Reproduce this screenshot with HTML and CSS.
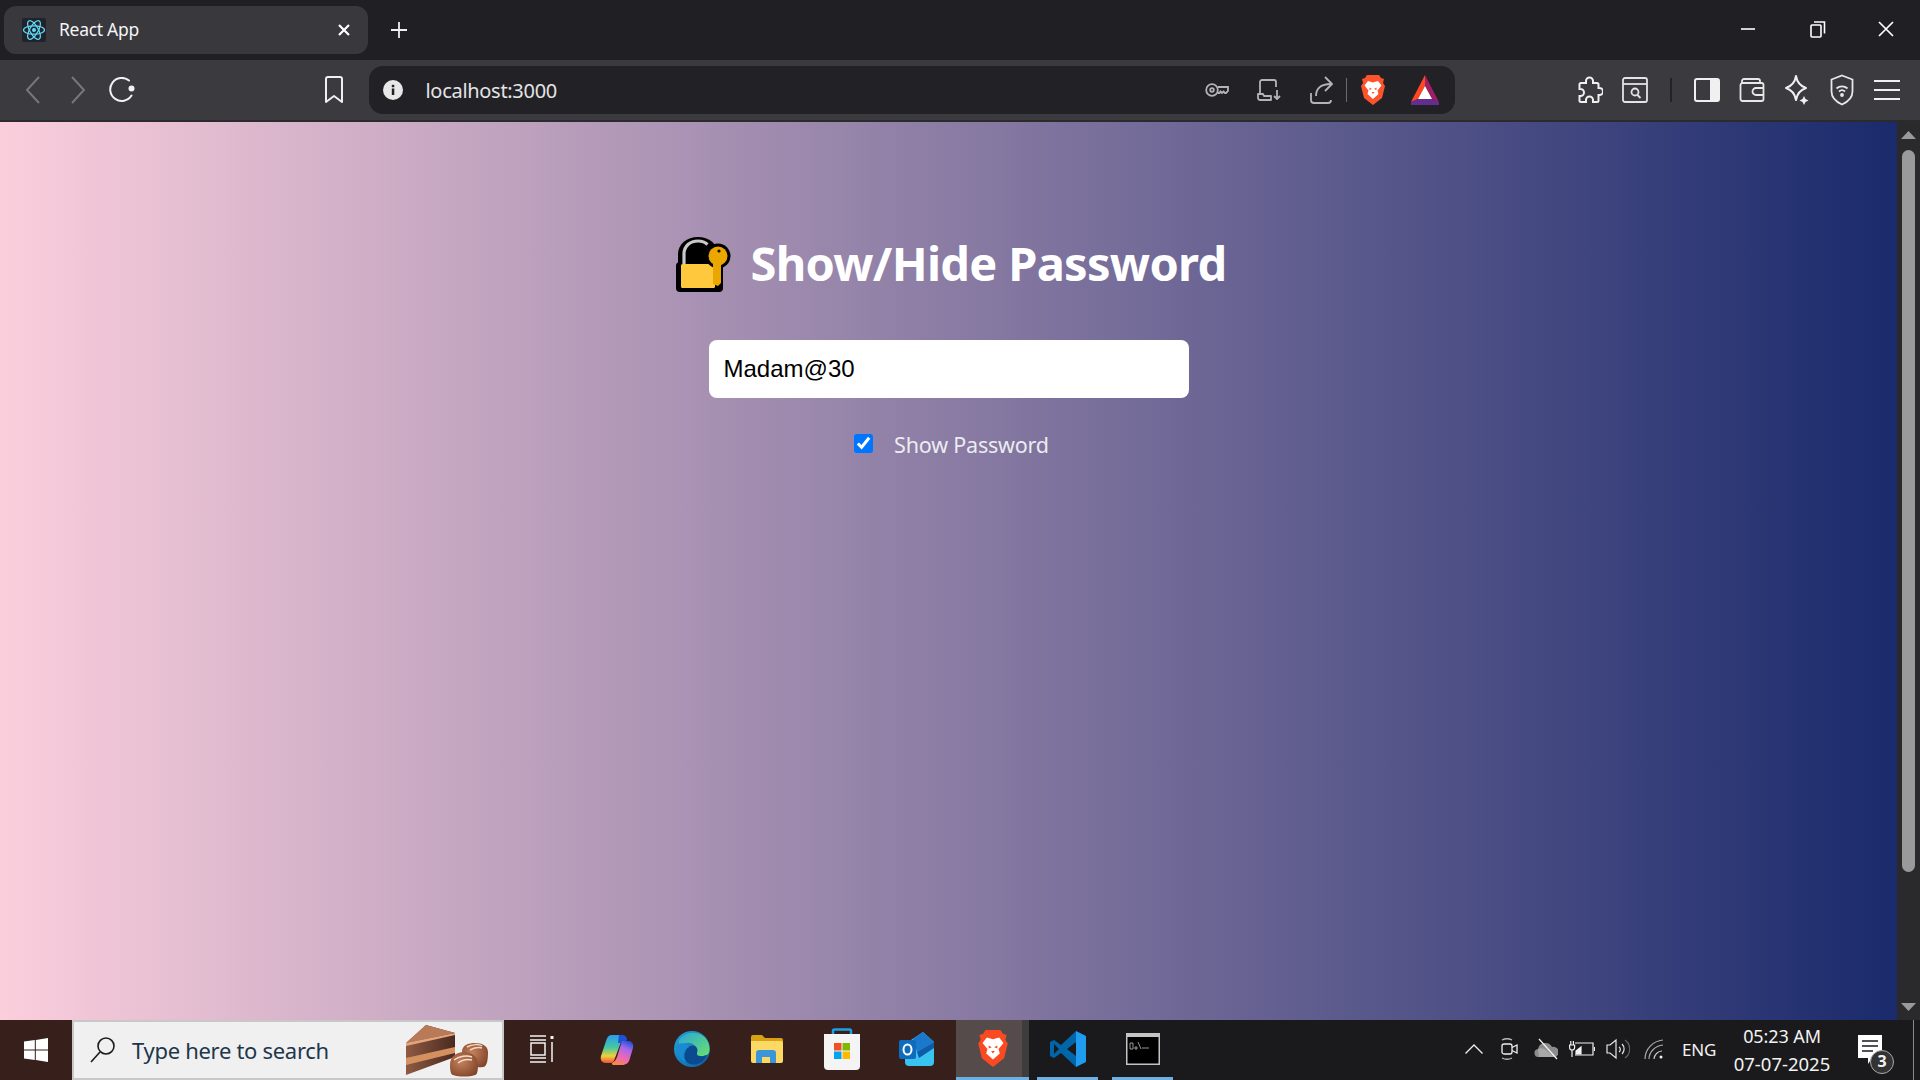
FILE: index.html
```html
<!DOCTYPE html>
<html lang="en">
<head>
<meta charset="utf-8">
<title>React App</title>
<link rel="stylesheet" href="styles.css">
</head>
<body>
<div class="screen">
  <header class="titlebar">
    <div class="tab">
      <svg class="favicon" width="24" height="24" viewBox="0 0 24 24"><rect width="24" height="24" rx="2" fill="#20232a"/><g fill="none" stroke="#61dafb" stroke-width="1.2"><ellipse cx="12" cy="12" rx="10.5" ry="4.2"/><ellipse cx="12" cy="12" rx="10.5" ry="4.2" transform="rotate(60 12 12)"/><ellipse cx="12" cy="12" rx="10.5" ry="4.2" transform="rotate(120 12 12)"/></g><circle cx="12" cy="12" r="2" fill="#61dafb"/></svg>
      <span class="tab-title">React App</span>
      <svg class="tab-close" width="14" height="14" viewBox="0 0 14 14"><path d="M2 2l10 10M12 2L2 12" stroke="#fff" stroke-width="2.2"/></svg>
    </div>
    <svg class="new-tab" width="16" height="16" viewBox="0 0 16 16"><path d="M8 0v16M0 8h16" stroke="#f0f0f0" stroke-width="1.8"/></svg>
    <div class="window-controls">
      <div class="win-btn win-min"><svg width="16" height="16" viewBox="0 0 16 16"><path d="M1 8h14" stroke="#fff" stroke-width="1.6"/></svg></div>
      <div class="win-btn"><svg width="16" height="18" viewBox="0 0 16 18" fill="none" stroke="#fff" stroke-width="1.6"><rect x="1" y="5" width="10" height="12" rx="1"/><path d="M4 2h10.500v11.500"/></svg></div>
      <div class="win-btn"><svg width="18" height="18" viewBox="0 0 18 18"><path d="M2 2l14 14M16 2L2 16" stroke="#fff" stroke-width="1.7"/></svg></div>
    </div>
  </header>

  <nav class="toolbar">
    <div class="tool-slot"><svg width="16" height="28" viewBox="0 0 16 28"><path d="M14 1L2 14l12 13" fill="none" stroke="#77777b" stroke-width="2"/></svg></div>
    <div class="tool-slot"><svg width="16" height="28" viewBox="0 0 16 28"><path d="M2 1l12 13L2 27" fill="none" stroke="#77777b" stroke-width="2"/></svg></div>
    <div class="tool-slot"><svg width="26" height="26" viewBox="0 0 26 26"><path d="M20 3.500a11.500 11.500 0 1 0 2.500 15" fill="none" stroke="#f2f2f2" stroke-width="2" stroke-linecap="round"/><circle cx="22.500" cy="11.500" r="3" fill="#f2f2f2"/></svg></div>
    <div class="tool-slot bookmark"><svg width="20" height="30" viewBox="0 0 20 30"><path d="M2 4a2 2 0 0 1 2-2h12a2 2 0 0 1 2 2v23l-8-6-8 6z" fill="none" stroke="#f0f0f0" stroke-width="2" stroke-linejoin="round"/></svg></div>
    <div class="urlbar">
      <div class="url-info"><svg width="20" height="20" viewBox="0 0 20 20"><circle cx="10" cy="10" r="10" fill="#e8e8e8"/><rect x="8.800" y="8.500" width="2.500" height="6.500" fill="#222226"/><rect x="8.800" y="4.800" width="2.500" height="2.400" fill="#222226"/></svg></div>
      <span class="url-text">localhost:3000</span>
      <div class="url-slot key"><svg width="24" height="16" viewBox="0 0 24 16" fill="none" stroke="#b4b4b6" stroke-width="1.800"><circle cx="7" cy="8" r="5.800"/><circle cx="7" cy="8" r="1.800"/><path d="M12.800 5H23v4l-2 2h-1l-1.500-1.500L17 11l-1.500-1.500-1 1.500h-1.700"/></svg></div>
      <div class="url-slot"><svg width="26" height="22" viewBox="0 0 26 22" fill="none" stroke="#b4b4b6" stroke-width="1.800" stroke-linejoin="round"><path d="M3 14V3a2 2 0 0 1 2-2h12a2 2 0 0 1 2 2v5"/><path d="M1 15h5l1 2h7v4H3a2 2 0 0 1-2-2zM20 11v9M17 17l3 3 3-3"/></svg></div>
      <div class="url-slot share"><svg width="24" height="28" viewBox="0 0 24 28" fill="none" stroke="#b4b4b6" stroke-width="1.800" stroke-linejoin="round"><path d="M2 17v7a3 3 0 0 0 3 3h14a3 3 0 0 0 3-3"/><path d="M7 20c0-7 4-12 15-12"/><path d="M16 1l7 7-7 7"/></svg></div>
      <div class="url-sep"></div>
      <div class="url-slot brave-slot"><svg width="24" height="30" viewBox="0 0 24 30"><path d="M6 0h12l2 3 3 1-1 4 2 3-3 12-9 7-9-7L0 11l2-3-1-4 3-1z" fill="#fb542b"/><path d="M7 6l5 1.500L17 6l3.500 4.500-4 5 1 3.500-5.500 5-5.500-5 1-3.500-4-5z" fill="#fff"/><path d="M8.500 12.500l2.500 1.500-2.500 1zM15.500 12.500L13 14l2.500 1zM10.500 17h3L12 19z" fill="#fb542b"/></svg></div>
      <div class="url-slot brave-slot"><svg width="28" height="30" viewBox="0 0 28 30"><path d="M14 0L0 27l7-3 7-13z" fill="#ff4724"/><path d="M14 0l14 27-7-3-7-13z" fill="#9e1f63"/><path d="M0 27l7-3h14l7 3v3H0z" fill="#662d91"/><path d="M14 11l7 13H7z" fill="#fff"/></svg></div>
    </div>
    <div class="tool-group">
      <div class="tool-slot2"><svg width="26" height="28" viewBox="0 0 26 28"><path d="M9 5a3.500 3.500 0 0 1 7 0v2h4a1.500 1.500 0 0 1 1.500 1.500V12h1a3.500 3.500 0 0 1 0 7h-1v5.500A1.500 1.500 0 0 1 20 26h-4v-2a3.500 3.500 0 0 0-7 0v2H4a1.500 1.500 0 0 1-1.500-1.500V20h1a3.500 3.500 0 0 0 0-7h-1V8.500A1.500 1.500 0 0 1 4 7h5z" fill="none" stroke="#f0f0f0" stroke-width="2"/></svg></div>
      <div class="tool-slot2"><svg width="26" height="26" viewBox="0 0 26 26" fill="none" stroke="#e4e4e4" stroke-width="1.800"><rect x="1" y="1" width="24" height="24" rx="2"/><path d="M1 7h24"/><circle cx="13" cy="15" r="3.500"/><path d="M15.500 18l3 3"/></svg></div>
      <div class="tool-sep-wrap"><div class="tool-sep"></div></div>
      <div class="tool-slot2"><svg width="26" height="24" viewBox="0 0 26 24"><rect x="1" y="1" width="24" height="22" rx="2" fill="none" stroke="#f0f0f0" stroke-width="2"/><rect x="16" y="1" width="9" height="22" fill="#f0f0f0"/></svg></div>
      <div class="tool-slot2"><svg width="26" height="26" viewBox="0 0 26 26" fill="none" stroke="#e8e8e8" stroke-width="1.800"><path d="M3 6V4a2 2 0 0 1 2-2h14a2 2 0 0 1 2 2v2"/><rect x="1.500" y="6" width="23" height="18" rx="2"/><path d="M25 11h-8a3.500 3.500 0 0 0 0 7h8"/></svg></div>
      <div class="tool-slot2"><svg width="26" height="32" viewBox="0 0 26 32"><path d="M12 2c1 6 4 10 10 12-6 2-9 6-10 12-1-6-4-10-10-12 6-2 9-6 10-12z" fill="none" stroke="#f0f0f0" stroke-width="2" stroke-linejoin="round"/><path d="M20 22l1.500 3 3 1.500-3 1.500-1.500 3-1.500-3-3-1.500 3-1.500z" fill="#f0f0f0"/></svg></div>
      <div class="tool-slot2"><svg width="24" height="32" viewBox="0 0 24 32" fill="none" stroke="#e8e8e8" stroke-width="1.800"><path d="M12 1.500l10.500 4v12c0 6-5 10.500-10.500 13C6.500 28 1.500 23.500 1.500 17.500v-12z"/><path d="M6.500 14.500a8 8 0 0 1 11 0M9 17.500a4.500 4.500 0 0 1 6 0"/><circle cx="12" cy="21" r="1" fill="#e8e8e8"/></svg></div>
      <div class="tool-slot2"><svg width="26" height="22" viewBox="0 0 26 22"><path d="M0 2h26M0 11h26M0 20h26" stroke="#f0f0f0" stroke-width="2"/></svg></div>
    </div>
  </nav>

  <div class="viewport">
    <main class="page">
      <h1 class="heading">
        <svg class="lock" width="56" height="56" viewBox="0 0 56 56"><path d="M3 30V18C3 8 12 1 23 1s20 7 20 17v12z" fill="#000"/><rect x="1" y="26" width="47" height="30" rx="4" fill="#000"/><path d="M9 28V18C9 10 15 5 23 5c4 0 7 1 9.500 3.500" fill="none" stroke="#c9c9c9" stroke-width="3.200"/><rect x="6" y="28" width="34" height="24" rx="1.500" fill="#ffc83d"/><circle cx="43" cy="20" r="12.500" fill="#000"/><circle cx="43" cy="20" r="9.500" fill="#eca600"/><path d="M38 26h8v21l-3 3-5-2z" fill="#eca600"/><circle cx="44" cy="15" r="1.600" fill="#111"/></svg>
        <span>Show/Hide Password</span>
      </h1>
      <input class="password" type="text" value="Madam@30" readonly>
      <label class="show-row">
        <input class="show-check" type="checkbox" checked>
        <span>Show Password</span>
      </label>
    </main>
    <aside class="scrollbar">
      <svg class="arrow" width="15" height="8" viewBox="0 0 15 8"><path d="M7.500 0L15 8H0z" fill="#9a9a9a"/></svg>
      <div class="thumb"></div>
      <svg class="arrow arrow-down" width="15" height="8" viewBox="0 0 15 8"><path d="M7.500 8L15 0H0z" fill="#9a9a9a"/></svg>
    </aside>
  </div>

  <footer class="taskbar">
    <div class="task-left">
      <div class="start"><svg width="24" height="24" viewBox="0 0 24 24" fill="#fff"><path d="M0 3.600l10.800-1.600v9.400H0zM11.800 1.900L24 0v11.400H11.800zM0 12.500h10.800V22L0 20.400zM11.800 12.500H24V24l-12.200-1.900z"/></svg></div>
      <div class="search">
        <svg class="search-icon" width="26" height="30" viewBox="0 0 26 30" fill="none" stroke="#1c1c1c" stroke-width="1.600"><circle cx="16" cy="11" r="8"/><path d="M10 17L1 27"/></svg>
        <span class="search-text">Type here to search</span>
        <svg class="cake" width="86" height="56" viewBox="0 0 86 56"><defs><linearGradient id="cakeside" x1="0" y1="0" x2="1" y2="0"><stop offset="0" stop-color="#8f5a42"/><stop offset="1" stop-color="#4a2a20"/></linearGradient><radialGradient id="choc" cx=".4" cy=".4" r=".7"><stop offset="0" stop-color="#c4825e"/><stop offset="1" stop-color="#7f4429"/></radialGradient></defs><path d="M2 21L22 3l29 8v24L2 53z" fill="url(#cakeside)"/><path d="M2 21L22 3l29 8z" fill="#b97a57"/><path d="M2 21l49-10v2L2 24z" fill="#e3a57e"/><path d="M2 36l49-11v6L2 43z" fill="#d4915f"/><path d="M58 30c0-7 6-9 13-9s13 3 13 9c0 8-1 15-5 15-12 2-21-6-21-15z" fill="url(#choc)"/><path d="M63 25c5-3 12-3 15-1M66 28c4-2 8-3 12-2" stroke="#f4d6be" stroke-width="1.500" fill="none"/><path d="M46 43c0-8 6-13 14-13s14 5 14 13c0 6-1 10-3 10-6 2-16 2-22 0-2 0-3-4-3-10z" fill="url(#choc)"/><path d="M50 38c5-4 13-5 18-3M54 41c4-3 9-4 14-3" stroke="#f8e0cc" stroke-width="1.500" fill="none"/></svg>
      </div>
      <div class="task-slot"><svg width="24" height="28" viewBox="0 0 24 28" fill="none" stroke="#f4f4f4" stroke-width="1.500"><path d="M0 1h16M0 27h16M0 5h16M0 23h16"/><rect x="1" y="8" width="14" height="12"/><path d="M22 7v20"/><rect x="20.500" y="1" width="3" height="3" fill="#f4f4f4" stroke="none"/></svg></div>
      <div class="task-slot"><svg width="34" height="31" viewBox="0 0 34 31"><defs><linearGradient id="cop1" x1="0.300" y1="0" x2="0.300" y2="1"><stop offset="0" stop-color="#2a9cf0"/><stop offset=".45" stop-color="#45c9a0"/><stop offset=".75" stop-color="#f0d03a"/><stop offset="1" stop-color="#f0503a"/></linearGradient><linearGradient id="cop2" x1="0.700" y1="0" x2="0.300" y2="1"><stop offset="0" stop-color="#2a50e0"/><stop offset=".3" stop-color="#a868e8"/><stop offset=".7" stop-color="#f06ab0"/><stop offset="1" stop-color="#f88848"/></linearGradient></defs><path d="M11 1h10c2 0 2 1 1.500 3L15 24c-1 3-2 5-5 5H6c-4 0-6-3-5-7L6 7c1-4 3-6 5-6z" fill="url(#cop1)"/><path d="M19 1h3c3 0 5 2 5 5l-3 3h-6z" fill="#1f50d8"/><path d="M22 7h6c4 0 6 3 5 7l-3 10c-1 5-4 7-8 7h-8c-2 0-3-1-1-3 1 0 3-2 4-5z" fill="url(#cop2)"/></svg></div>
      <div class="task-slot"><svg width="36" height="36" viewBox="0 0 36 36"><defs><linearGradient id="edg1" x1="0" y1="0" x2="1" y2="1"><stop offset="0" stop-color="#1fa4d8"/><stop offset="1" stop-color="#0a5fa8"/></linearGradient><linearGradient id="edg2" x1="0" y1="0" x2="1" y2="1"><stop offset="0" stop-color="#2aa6d8"/><stop offset="1" stop-color="#6ce06a"/></linearGradient></defs><circle cx="18" cy="18" r="18" fill="url(#edg1)"/><path d="M5 9C11 0 28-2 34 11c2 5 2 10 0 12-3 3-11 3-13-1 3-3 1-9-5-10C11 11 8 13 5 17z" fill="url(#edg2)"/><path d="M16 15c5-2 9 2 7 7-1 4 4 4 10 2-3 8-12 12-19 8-6-4-4-14 2-17z" fill="#0b4a8e"/><path d="M15 16c-6 3-7 10-3 15-6-3-11-10-8-17 3-3 8-2 11 2z" fill="#1a8bd0"/></svg></div>
      <div class="task-slot"><svg width="32" height="32" viewBox="0 0 32 32"><path d="M0 4a2 2 0 0 1 2-2h9l3 3h16a2 2 0 0 1 2 2v3H0z" fill="#d9a114"/><path d="M0 8h30a2 2 0 0 1 2 2v18a2 2 0 0 1-2 2H2a2 2 0 0 1-2-2z" fill="#fbd964"/><path d="M5 30V20a3 3 0 0 1 3-3h14a3 3 0 0 1 3 3v10h-6v-6h-8v6z" fill="#3b96d9"/></svg></div>
      <div class="task-slot"><svg width="36" height="42" viewBox="0 0 36 42"><path d="M9 8V3a1.500 1.500 0 0 1 1.500-1.500h15A1.500 1.500 0 0 1 27 3v5" fill="none" stroke="#1ea0e8" stroke-width="2.500"/><path d="M0 6h36v32a4 4 0 0 1-4 4H4a4 4 0 0 1-4-4z" fill="#f4f4f4"/><rect x="10" y="15" width="7.500" height="7.500" fill="#f25022"/><rect x="18.500" y="15" width="7.500" height="7.500" fill="#7fba00"/><rect x="10" y="23.500" width="7.500" height="7.500" fill="#00a4ef"/><rect x="18.500" y="23.500" width="7.500" height="7.500" fill="#ffb900"/></svg></div>
      <div class="task-slot"><svg width="36" height="36" viewBox="0 0 36 36"><path d="M6 13L24 1l11 10v20a4 4 0 0 1-4 4H10a4 4 0 0 1-4-4z" fill="#38c3f0"/><path d="M14 8l10-7 11 10L18 21z" fill="#1a79cc"/><path d="M18 21l17-10v6L20 27z" fill="#0f5ba6"/><rect x="0" y="9" width="17" height="19" rx="2" fill="#0f6cbd"/><ellipse cx="8.500" cy="18.500" rx="4" ry="5" fill="none" stroke="#fff" stroke-width="2"/></svg></div>
      <div class="task-slot task-active"><svg width="30" height="37" viewBox="0 0 24 30"><path d="M6 0h12l2 3 3 1-1 4 2 3-3 12-9 7-9-7L0 11l2-3-1-4 3-1z" fill="#fb4a22"/><path d="M7 6l5 1.500L17 6l3.500 4.500-4 5 1 3.500-5.500 5-5.500-5 1-3.500-4-5z" fill="#fff"/><path d="M8.500 12.500l2.500 1.500-2.500 1zM15.500 12.500L13 14l2.500 1zM10.500 17h3L12 19z" fill="#fb4a22"/></svg></div>
    </div>
    <div class="task-right">
      <div class="run-slot code"><svg width="36" height="36" viewBox="0 0 36 36"><path d="M26 0l10 5v26l-10 5z" fill="#1f9cf0"/><path d="M26 0L11 14 4 9 0 11v14l4 2 7-5 15 14V25l-9-7 9-7z" fill="#0065a9"/><path d="M4 13l5 5-5 5z" fill="#1a1a1c"/></svg></div>
      <div class="run-slot term"><svg width="34" height="32" viewBox="0 0 34 32"><rect width="34" height="32" fill="#c4c4c4"/><rect x="1.500" y="4" width="31" height="26.500" fill="#000"/><path d="M4 10h3v6H4zM9 14h2v2H9zM12 9l3 7M16 15h7" stroke="#bbb" stroke-width=".8" fill="none"/></svg></div>
      <div class="tray">
        <div class="tray-slot"><svg width="18" height="10" viewBox="0 0 18 10"><path d="M0.500 9.500L9 1l8.500 8.500" fill="none" stroke="#efefef" stroke-width="1.300"/></svg></div>
        <div class="tray-slot"><svg width="18" height="22" viewBox="0 0 18 22" fill="none" stroke="#efefef" stroke-width="1.300"><rect x="1" y="6" width="10" height="10" rx="2"/><path d="M11 9.500l5-2.500v8l-5-2.500"/><path d="M1 2c3-1.500 7-1.500 10 0M1 20c3 1.500 7 1.500 10 0" stroke="#bbb"/></svg></div>
        <div class="tray-slot"><svg width="24" height="22" viewBox="0 0 24 22"><path d="M5 19a4 4 0 0 1-1-8 7.500 7.500 0 0 1 14-2 5 5 0 0 1 3 10z" fill="#8c8c8c"/><path d="M4 11c3-2 8 0 9 2l8 6H5z" fill="#a8a8a8"/><path d="M5 1l18 20" stroke="#f2f2f2" stroke-width="1.300"/></svg></div>
        <div class="tray-slot"><svg width="26" height="18" viewBox="0 0 26 18" fill="none" stroke="#f2f2f2" stroke-width="1.200"><path d="M6 3h18v12H6"/><path d="M25.500 7v4"/><path d="M7 14h5V7l-5 4z" fill="#f2f2f2"/><path d="M0.600 5v2.500a2.500 2.500 0 0 0 5 0V5zM1.800 5V1M4.400 5V1M3 10v7"/></svg></div>
        <div class="tray-slot"><svg width="24" height="22" viewBox="0 0 24 22" fill="none" stroke="#e8e8e8" stroke-width="1.200"><path d="M1 7h3l6-5v18l-6-5H1z"/><path d="M13 9a3 3 0 0 1 0 5M16 6a7 7 0 0 1 0 10" /><path d="M19 2a11 11 0 0 1 0 18" stroke="#666"/></svg></div>
        <div class="tray-slot"><svg width="20" height="20" viewBox="0 0 20 20" fill="none" stroke="#c8c8c8" stroke-width="1.200"><path d="M1 20C1 10 9 2 19 1M5 20c0-7 6-13 14-14" stroke="#aaa"/><path d="M10 20c0-4 4-8 8-8"/><circle cx="17" cy="18" r="1.500" fill="#f2f2f2" stroke="none"/></svg></div>
        <div class="tray-lang">ENG</div>
        <div class="clock"><span>05:23 AM</span><span class="date">07-07-2025</span></div>
        <div class="notify">
          <svg width="24" height="30" viewBox="0 0 24 30"><path d="M0 0h24v23H14l-4 6v-6H0z" fill="#fff"/><path d="M4 6h16M4 11h16M4 16h11" stroke="#1a1a1c" stroke-width="1.400"/></svg>
          <span class="badge">3</span>
        </div>
        <div class="desk-line"></div>
      </div>
    </div>
  </footer>
</div>
</body>
</html>
```

FILE: styles.css
```css
* { box-sizing: border-box; }
html, body { margin: 0; height: 100%; overflow: hidden; }
body { font-family: "Noto Sans", "Open Sans", sans-serif; color: #fff; }
svg { display: block; flex: none; }
.screen { display: flex; flex-direction: column; width: 1920px; height: 1080px; }

.titlebar { display: flex; align-items: center; height: 60px; background: #1f1f24; padding-left: 4px; flex: none; }
.tab { display: flex; align-items: center; width: 364px; height: 48px; background: #38383d; border-radius: 12px; padding: 0 14px 0 18px; }
.tab-title { margin-left: 13px; font-size: 17.500px; letter-spacing: -0.3px; color: #f4f4f4; padding-bottom: 2px; }
.tab-close { margin-left: auto; margin-right: 3px; }
.new-tab { margin-left: 23px; }
.window-controls { display: flex; margin-left: auto; height: 60px; }
.win-btn { display: flex; align-items: center; justify-content: center; width: 68px; padding-bottom: 2px; }
.win-min { padding-right: 5px; }

.toolbar { display: flex; align-items: center; height: 62px; background: #3a3a3f; border-bottom: 2px solid #2b2b2e; padding-left: 11px; flex: none; }
.tool-slot { display: flex; align-items: center; justify-content: center; width: 44.500px; height: 48px; }
.bookmark { margin-left: 167.500px; }
.urlbar { display: flex; align-items: center; width: 1086px; height: 48px; margin-left: 12px; background: #222226; border-radius: 14px; padding-right: 4px; }
.url-info { display: flex; align-items: center; justify-content: center; width: 48px; }
.url-text { flex: 1; margin-left: 9px; font-size: 20px; letter-spacing: -0.3px; color: #e4e4e6; }
.url-slot { display: flex; align-items: center; justify-content: center; width: 51px; }
.url-slot.key { padding-right: 5px; }
.url-slot.share { width: 50px; }
.url-slot.brave-slot { width: 52px; }
.url-sep { width: 1px; height: 24px; background: #6a6a6e; }
.tool-group { display: flex; align-items: center; margin-left: auto; padding-right: 11px; }
.tool-slot2 { display: flex; align-items: center; justify-content: center; width: 45px; }
.tool-sep-wrap { display: flex; justify-content: center; width: 27px; }
.tool-sep { width: 2px; height: 24px; background: #242428; }

.viewport { display: flex; flex: 1; min-height: 0; }
.page { flex: 1; display: flex; flex-direction: column; align-items: center; padding-top: 108px; background: linear-gradient(to right, #fbcedc, #1a2a6c); }
.heading { display: flex; align-items: center; gap: 20px; margin: 0 0 0 4px; height: 66px; font-size: 47px; font-weight: 700; letter-spacing: -0.7px; line-height: 66px; }
.lock { margin-top: 1px; }
.password { display: block; width: 480px; height: 58px; margin-top: 44px; padding: 0 15px; border: 0; border-radius: 8px; background: #fff; color: #000; font: 24px "Liberation Sans", Arial, sans-serif; outline: none; }
.show-row { display: flex; align-items: center; margin-top: 30px; margin-left: 6px; height: 32px; font-size: 21.500px; letter-spacing: -0.2px; color: #ececf0; }
.show-check { width: 19px; height: 19px; margin: 0 21px 2px 0; accent-color: #0075ff; }

.scrollbar { display: flex; flex-direction: column; align-items: center; width: 23px; background: #2a2a2c; flex: none; padding: 9px 0; }
.thumb { width: 13px; height: 722px; margin-top: 11px; background: #9a9a9a; border-radius: 7px; }
.arrow-down { margin-top: auto; }

.taskbar { display: flex; height: 60px; flex: none; }
.task-left { display: flex; width: 1029px; background: #371f1c; }
.start { display: flex; align-items: center; justify-content: center; width: 72px; }
.search { display: flex; align-items: center; width: 432px; border: 2px solid #c8c8c8; background: #f0f0f0; padding-left: 16px; }
.search-text { margin-left: 16px; font-size: 22px; letter-spacing: -0.3px; color: #20364a; }
.cake { margin-left: auto; margin-right: 12px; }
.task-slot { display: flex; align-items: center; justify-content: center; width: 75px; padding-bottom: 2px; }
.task-active { width: 73px; margin-left: 2px; background: linear-gradient(to right, #544b4a 66px, #3f3c3d 66px); border-bottom: 3px solid #6cb0e6; padding-bottom: 0; }
.task-right { display: flex; flex: 1; background: #1a1a1c; }
.run-slot { display: flex; align-items: center; justify-content: center; width: 61px; border-bottom: 3px solid #6cb0e6; }
.code { margin-left: 8px; }
.term { margin-left: 14px; }
.tray { display: flex; align-items: center; margin-left: auto; color: #f2f2f2; }
.tray-slot { display: flex; align-items: center; justify-content: center; width: 36px; padding-bottom: 2px; }
.tray-lang { width: 50px; text-align: center; font-size: 17px; letter-spacing: -0.2px; padding: 0 0 2px 4px; }
.clock { display: flex; flex-direction: column; align-items: center; gap: 4px; width: 120px; font-size: 18px; letter-spacing: -0.1px; line-height: 24px; }
.date { font-size: 18.500px; letter-spacing: 0; }
.notify { position: relative; display: flex; justify-content: center; width: 56px; }
.badge { position: absolute; left: 28px; top: 15px; width: 24px; height: 24px; border-radius: 50%; background: #333; border: 1.500px solid #aaa; font-size: 16px; font-weight: 700; line-height: 21px; text-align: center; }
.desk-line { width: 1px; height: 60px; margin: 0 6px 0 15px; background: #8a8a8a; }
```
